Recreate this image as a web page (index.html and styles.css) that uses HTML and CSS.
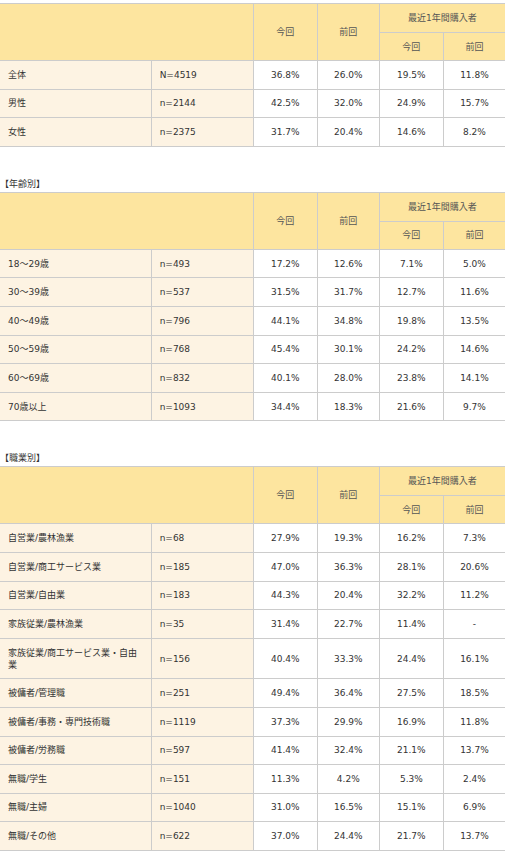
FILE: index.html
```html
<!DOCTYPE html>
<html lang="ja">
<head>
    <meta charset="UTF-8">
    <meta name="viewport" content="width=device-width, initial-scale=1.0">
    <title>購入率</title>
    <link rel="stylesheet" href="styles.css">
</head>
<body>
    <div class="page">
        <table class="data">
            <colgroup>
                <col class="c-label"><col class="c-n"><col class="c-a"><col class="c-b"><col class="c-a"><col class="c-b">
            </colgroup>
            <thead>
                <tr class="h1">
                    <th colspan="2" rowspan="2"></th>
                    <th rowspan="2">今回</th>
                    <th rowspan="2">前回</th>
                    <th colspan="2">最近1年間購入者</th>
                </tr>
                <tr class="h2">
                    <th>今回</th>
                    <th>前回</th>
                </tr>
            </thead>
            <tbody>
                <tr><td class="label">全体</td><td class="n">N=4519</td><td>36.8%</td><td>26.0%</td><td>19.5%</td><td>11.8%</td></tr>
                <tr><td class="label">男性</td><td class="n">n=2144</td><td>42.5%</td><td>32.0%</td><td>24.9%</td><td>15.7%</td></tr>
                <tr><td class="label">女性</td><td class="n">n=2375</td><td>31.7%</td><td>20.4%</td><td>14.6%</td><td>8.2%</td></tr>
            </tbody>
        </table>

        <p class="section">【年齢別】</p>
        <table class="data">
            <colgroup>
                <col class="c-label"><col class="c-n"><col class="c-a"><col class="c-b"><col class="c-a"><col class="c-b">
            </colgroup>
            <thead>
                <tr class="h1">
                    <th colspan="2" rowspan="2"></th>
                    <th rowspan="2">今回</th>
                    <th rowspan="2">前回</th>
                    <th colspan="2">最近1年間購入者</th>
                </tr>
                <tr class="h2">
                    <th>今回</th>
                    <th>前回</th>
                </tr>
            </thead>
            <tbody>
                <tr><td class="label">18～29歳</td><td class="n">n=493</td><td>17.2%</td><td>12.6%</td><td>7.1%</td><td>5.0%</td></tr>
                <tr><td class="label">30～39歳</td><td class="n">n=537</td><td>31.5%</td><td>31.7%</td><td>12.7%</td><td>11.6%</td></tr>
                <tr><td class="label">40～49歳</td><td class="n">n=796</td><td>44.1%</td><td>34.8%</td><td>19.8%</td><td>13.5%</td></tr>
                <tr><td class="label">50～59歳</td><td class="n">n=768</td><td>45.4%</td><td>30.1%</td><td>24.2%</td><td>14.6%</td></tr>
                <tr><td class="label">60～69歳</td><td class="n">n=832</td><td>40.1%</td><td>28.0%</td><td>23.8%</td><td>14.1%</td></tr>
                <tr><td class="label">70歳以上</td><td class="n">n=1093</td><td>34.4%</td><td>18.3%</td><td>21.6%</td><td>9.7%</td></tr>
            </tbody>
        </table>

        <p class="section">【職業別】</p>
        <table class="data">
            <colgroup>
                <col class="c-label"><col class="c-n"><col class="c-a"><col class="c-b"><col class="c-a"><col class="c-b">
            </colgroup>
            <thead>
                <tr class="h1">
                    <th colspan="2" rowspan="2"></th>
                    <th rowspan="2">今回</th>
                    <th rowspan="2">前回</th>
                    <th colspan="2">最近1年間購入者</th>
                </tr>
                <tr class="h2">
                    <th>今回</th>
                    <th>前回</th>
                </tr>
            </thead>
            <tbody>
                <tr><td class="label">自営業/農林漁業</td><td class="n">n=68</td><td>27.9%</td><td>19.3%</td><td>16.2%</td><td>7.3%</td></tr>
                <tr><td class="label">自営業/商工サービス業</td><td class="n">n=185</td><td>47.0%</td><td>36.3%</td><td>28.1%</td><td>20.6%</td></tr>
                <tr><td class="label">自営業/自由業</td><td class="n">n=183</td><td>44.3%</td><td>20.4%</td><td>32.2%</td><td>11.2%</td></tr>
                <tr><td class="label">家族従業/農林漁業</td><td class="n">n=35</td><td>31.4%</td><td>22.7%</td><td>11.4%</td><td>-</td></tr>
                <tr><td class="label">家族従業/商工サービス業・自由業</td><td class="n">n=156</td><td>40.4%</td><td>33.3%</td><td>24.4%</td><td>16.1%</td></tr>
                <tr><td class="label">被傭者/管理職</td><td class="n">n=251</td><td>49.4%</td><td>36.4%</td><td>27.5%</td><td>18.5%</td></tr>
                <tr><td class="label">被傭者/事務・専門技術職</td><td class="n">n=1119</td><td>37.3%</td><td>29.9%</td><td>16.9%</td><td>11.8%</td></tr>
                <tr><td class="label">被傭者/労務職</td><td class="n">n=597</td><td>41.4%</td><td>32.4%</td><td>21.1%</td><td>13.7%</td></tr>
                <tr><td class="label">無職/学生</td><td class="n">n=151</td><td>11.3%</td><td>4.2%</td><td>5.3%</td><td>2.4%</td></tr>
                <tr><td class="label">無職/主婦</td><td class="n">n=1040</td><td>31.0%</td><td>16.5%</td><td>15.1%</td><td>6.9%</td></tr>
                <tr><td class="label">無職/その他</td><td class="n">n=622</td><td>37.0%</td><td>24.4%</td><td>21.7%</td><td>13.7%</td></tr>
            </tbody>
        </table>
    </div>
</body>
</html>
```

FILE: styles.css
```css
body {
    margin: 0;
    background-color: #fff;
    font-family: "DejaVu Sans", "Noto Sans CJK JP", sans-serif;
    font-size: 9px;
    color: #333;
}
.page {
    padding-top: 3px;
}
.data {
    width: 506px;
    table-layout: fixed;
    border-collapse: collapse;
    margin-bottom: 29px;
}
.c-label { width: 151px; }
.c-n { width: 102px; }
.c-a { width: 64px; }
.c-b { width: 62px; }
.data th,
.data td {
    border: 1px solid #ccc;
    line-height: 12px;
    padding: 7.8px 8px;
    text-align: center;
    font-weight: normal;
}
.data tr > :first-child {
    border-left: none;
}
.data th {
    background-color: #fde59f;
    color: #555;
}
.data .h1 th {
    height: 28px;
    padding: 0 8px;
}
.data .h2 th {
    height: 27px;
    padding: 0 8px;
}
.data td {
    background-color: #fff;
}
.data td.label,
.data td.n {
    background-color: #fdf3e3;
    text-align: left;
}
.section {
    margin: 0;
    height: 16px;
    line-height: 16px;
    color: #333;
}
```
